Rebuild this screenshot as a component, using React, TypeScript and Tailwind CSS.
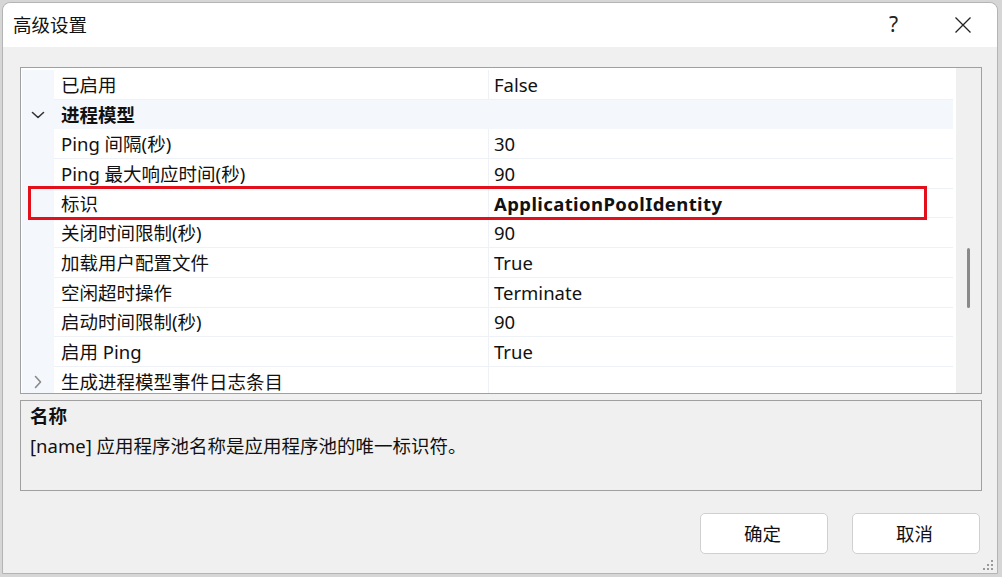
import React from 'react';

type Row = {
    name: string;
    value?: string;
    kind?: 'category' | 'collapsed';
    bold?: boolean;
};

const rows: Row[] = [
    { name: '已启用', value: 'False' },
    { name: '进程模型', kind: 'category' },
    { name: 'Ping 间隔(秒)', value: '30' },
    { name: 'Ping 最大响应时间(秒)', value: '90' },
    { name: '标识', value: 'ApplicationPoolIdentity', bold: true },
    { name: '关闭时间限制(秒)', value: '90' },
    { name: '加载用户配置文件', value: 'True' },
    { name: '空闲超时操作', value: 'Terminate' },
    { name: '启动时间限制(秒)', value: '90' },
    { name: '启用 Ping', value: 'True' },
    { name: '生成进程模型事件日志条目', kind: 'collapsed' },
];

const ChevronDown = () => (
    <svg width="14" height="8" viewBox="0 0 14 8" fill="none">
        <path d="M1.5 1.5 L7 6.5 L12.5 1.5" stroke="#333" strokeWidth="1.6" strokeLinecap="round" strokeLinejoin="round" />
    </svg>
);

const ChevronRight = () => (
    <svg width="8" height="14" viewBox="0 0 8 14" fill="none">
        <path d="M1.5 1.5 L6.5 7 L1.5 12.5" stroke="#8a8a8a" strokeWidth="1.6" strokeLinecap="round" strokeLinejoin="round" />
    </svg>
);

const GridRow: React.FC<{ row: Row }> = ({ row }) => {
    if (row.kind === 'category') {
        return (
            <div className="h-[29.7px] flex items-center bg-[#f4f7fc] shrink-0">
                <div className="w-[32px] flex justify-center pt-[1px]">
                    <ChevronDown />
                </div>
                <span className="pl-[7px] font-bold">{row.name}</span>
            </div>
        );
    }
    return (
        <div className="h-[29.7px] flex shrink-0">
            <div className="w-[32px] bg-[#f4f7fc] flex items-center justify-center">
                {row.kind === 'collapsed' && <ChevronRight />}
            </div>
            <div className="w-[434px] flex items-center pl-[7px] pt-[1px] border-b border-[#eef1f6] bg-white">
                {row.name}
            </div>
            <div className="w-[1px] bg-[#eef1f6]" />
            <div className={`flex-1 flex items-center pl-[5px] pt-[1px] border-b border-[#eef1f6] bg-white ${row.bold ? 'font-bold tracking-[0.4px]' : ''}`}>
                {row.value}
            </div>
        </div>
    );
};

export default function App() {
    return (
        <div className="w-[1002px] h-[577px] bg-[#d6d6d6] pl-[2px] pt-[2px] overflow-hidden">
            <div
                className="relative w-[996px] h-[572px] border border-[#b4b4b4] rounded-t-[8px] bg-[#f0f0f0] flex flex-col text-[18.5px] text-[#111]"
                style={{ fontFamily: '"Noto Sans", "Noto Sans CJK SC", sans-serif' }}
            >
                {/* title bar */}
                <div className="h-[44px] bg-white rounded-t-[8px] flex items-center pl-[10px] shrink-0">
                    <span>高级设置</span>
                    <div className="ml-auto flex h-full">
                        <div className="w-[69px] flex items-center justify-center text-[21px] text-[#222]">?</div>
                        <div className="w-[69px] flex items-center justify-center">
                            <svg width="18" height="18" viewBox="0 0 18 18">
                                <path d="M1.5 1.5 L16.5 16.5 M16.5 1.5 L1.5 16.5" stroke="#222" strokeWidth="1.3" />
                            </svg>
                        </div>
                    </div>
                </div>

                <div className="flex-1 flex flex-col pl-[17px] pr-[15px] pt-[20px]">
                    {/* property grid */}
                    <div className="relative h-[327px] border border-[#a0a0a0] bg-white flex shrink-0">
                        <div className="flex-1 flex flex-col pt-[2px] pl-[1px] pr-[3px] overflow-hidden">
                            {rows.map(r => (
                                <GridRow key={r.name} row={r} />
                            ))}
                        </div>
                        <div className="w-[25px] bg-[#f0f0f0] flex justify-center pt-[180px]">
                            <div className="w-[3px] h-[60px] rounded-full bg-[#8a8a8a]" />
                        </div>
                        <div className="absolute left-[7px] top-[118px] w-[899px] h-[34px] border-[3px] border-[#e3101c]" />
                    </div>

                    {/* description */}
                    <div className="mt-[6px] h-[91px] border border-[#a0a0a0] bg-[#f0f0f0] pl-[9px] pt-[1px] shrink-0">
                        <div className="font-bold leading-[28px]">名称</div>
                        <div className="leading-[28px] mt-[2px]">[name] 应用程序池名称是应用程序池的唯一标识符。</div>
                    </div>

                    {/* buttons */}
                    <div className="flex justify-end gap-[24px] mt-[22px] pr-[2px]">
                        <button className="w-[128px] h-[41px] bg-white border border-[#d0d0d0] rounded-[5px] pr-[3px]">确定</button>
                        <button className="w-[128px] h-[41px] bg-white border border-[#d0d0d0] rounded-[5px] pr-[3px]">取消</button>
                    </div>
                </div>

                <svg className="absolute right-[3px] bottom-[2px]" width="12" height="12" viewBox="0 0 12 12">
                    <g fill="#9a9a9a">
                        <rect x="9" y="1" width="2" height="2" />
                        <rect x="5" y="5" width="2" height="2" />
                        <rect x="9" y="5" width="2" height="2" />
                        <rect x="1" y="9" width="2" height="2" />
                        <rect x="5" y="9" width="2" height="2" />
                        <rect x="9" y="9" width="2" height="2" />
                    </g>
                </svg>
            </div>
        </div>
    );
}
